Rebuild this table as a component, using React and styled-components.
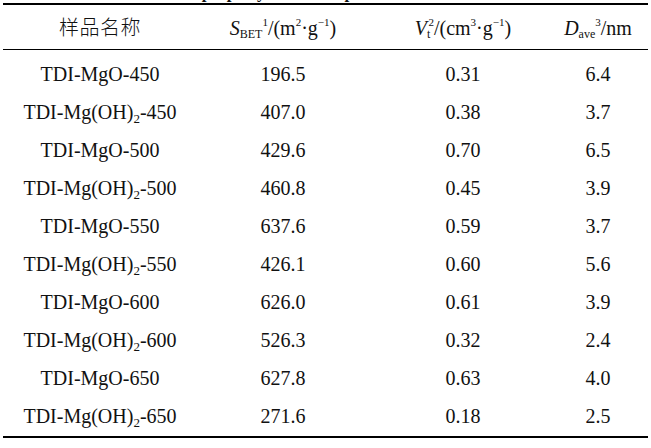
import React from 'react';
import styled, { createGlobalStyle } from 'styled-components';

const SERIF = `"Liberation Serif", Tinos, "Times New Roman", serif`;

const Global = createGlobalStyle`
  html, body { margin: 0; padding: 0; background: #fff; }
  body { font-family: ${SERIF}; color: #111; }
`;

const Page = styled.div`
  width: 651px;
  height: 448px;
  overflow: hidden;
  background: #fff;
  font-family: ${SERIF};
  color: #111;
`;

const TitleStrip = styled.div`
  height: 3px;
  overflow: hidden;
`;

const Title = styled.div`
  font-weight: 700;
  font-size: 17px;
  line-height: 20px;
  white-space: nowrap;
  padding-left: 79px;
  margin-top: -17px;
`;

const Table = styled.div`
  margin: 0 3px;
  width: 645px;
  border-top: 2px solid #000;
  border-bottom: 2px solid #000;
`;

const Row = styled.div`
  display: grid;
  grid-template-columns: 194px 172px 188px 82px 1fr;
  height: ${p => p.$h}px;
  align-items: center;
  font-size: 20px;
  line-height: ${p => p.$h}px;
  border-bottom: ${p => (p.$rule ? '1.5px solid #000' : 'none')};
`;

const Body = styled.div`
  padding-top: 5px;
  padding-bottom: 1px;
`;

const Cell = styled.div`
  text-align: center;
  white-space: nowrap;
`;

const Cjk = styled.span`
  font-family: "Noto Sans CJK SC", "Noto Sans CJK JP", sans-serif;
  font-size: 20px;
  font-weight: 300;
  letter-spacing: 0.5px;
`;

const I = styled.i`
  font-style: italic;
`;

const Sub = styled.sub`
  font-size: ${p => p.$s || 0.6}em;
  vertical-align: ${p => p.$v || -0.25}em;
  line-height: 0;
`;

const Sup = styled.sup`
  font-size: 0.55em;
  vertical-align: 0.8em;
  line-height: 0;
  margin-left: ${p => p.$ml || 0}px;
`;

const rows = [
  [false, 450, '196.5', '0.31', '6.4'],
  [true, 450, '407.0', '0.38', '3.7'],
  [false, 500, '429.6', '0.70', '6.5'],
  [true, 500, '460.8', '0.45', '3.9'],
  [false, 550, '637.6', '0.59', '3.7'],
  [true, 550, '426.1', '0.60', '5.6'],
  [false, 600, '626.0', '0.61', '3.9'],
  [true, 600, '526.3', '0.32', '2.4'],
  [false, 650, '627.8', '0.63', '4.0'],
  [true, 650, '271.6', '0.18', '2.5'],
];

function Sample({ oh, t }) {
  if (!oh) return <>TDI-MgO-{t}</>;
  return (
    <>
      TDI-Mg(OH)<Sub $s={0.65} $v={-0.3}>2</Sub>-{t}
    </>
  );
}

export default function App() {
  return (
    <Page>
      <Global />
      <TitleStrip>
        <Title>Table 2 Textural property of the samples</Title>
      </TitleStrip>
      <Table>
        <Row $h={44} $rule>
          <Cell><Cjk>样品名称</Cjk></Cell>
          <Cell>
            <I>S</I><Sub>BET</Sub><Sup>1</Sup>/(m<Sup>2</Sup>·g<Sup>−1</Sup>)
          </Cell>
          <Cell>
            <I>V</I><Sub>t</Sub><Sup $ml={-2}>2</Sup>/(cm<Sup>3</Sup>·g<Sup>−1</Sup>)
          </Cell>
          <Cell>
            <I>D</I><Sub>ave</Sub><Sup>3</Sup>/nm
          </Cell>
          <Cell />
        </Row>
        <Body>
          {rows.map(([oh, t, s, v, d], i) => (
            <Row key={i} $h={38}>
              <Cell><Sample oh={oh} t={t} /></Cell>
              <Cell>{s}</Cell>
              <Cell>{v}</Cell>
              <Cell>{d}</Cell>
              <Cell />
            </Row>
          ))}
        </Body>
      </Table>
    </Page>
  );
}
